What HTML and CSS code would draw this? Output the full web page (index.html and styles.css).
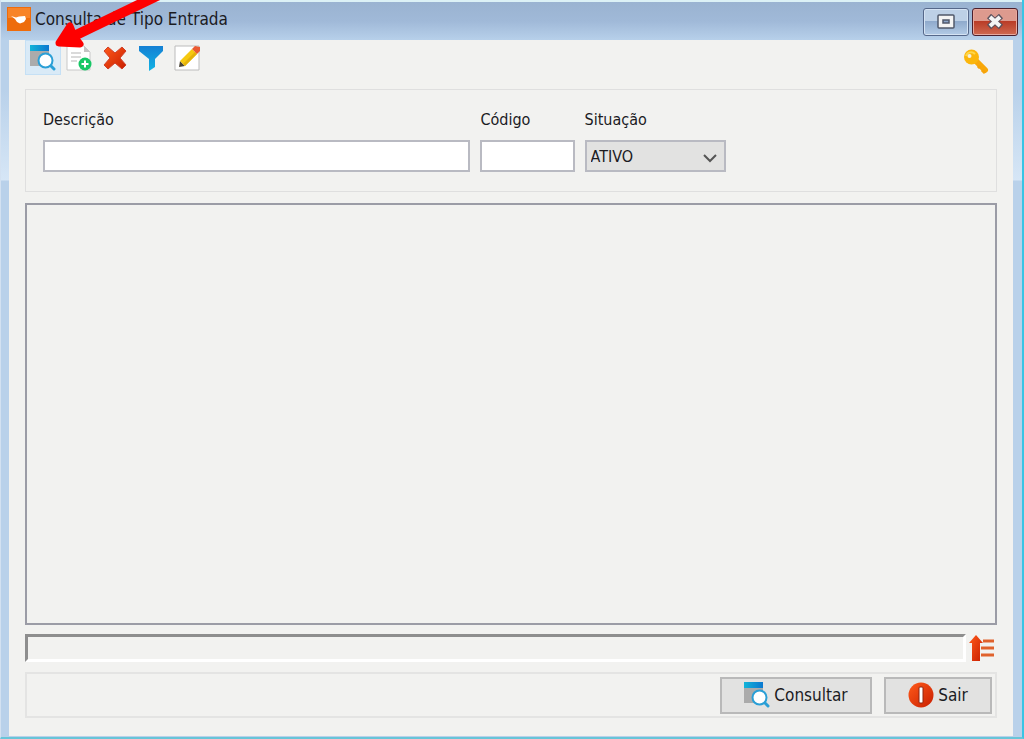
FILE: index.html
```
<!DOCTYPE html>
<html lang="pt-BR">
<head>
    <meta charset="utf-8">
    <title>Consulta de Tipo Entrada</title>
    <link rel="stylesheet" href="styles.css">
</head>
<body>
    <svg width="0" height="0" class="defs">
        <defs>
            <linearGradient id="azul" x1="0" x2="1" y1="0" y2="0">
                <stop offset="0" stop-color="#12b4d8"/>
                <stop offset="1" stop-color="#0b78d0"/>
            </linearGradient>
            <linearGradient id="funil" x1="0" x2="0" y1="0" y2="1">
                <stop offset="0" stop-color="#1580d4"/>
                <stop offset="1" stop-color="#12b4e4"/>
            </linearGradient>
            <linearGradient id="vermelho" x1="0" x2="1" y1="0" y2="1">
                <stop offset="0" stop-color="#ff5a1a"/>
                <stop offset="1" stop-color="#c81e00"/>
            </linearGradient>
            <symbol id="consulta" viewBox="0 0 26 26">
                <path d="M0 5h19v16H0z" fill="#ababab"/>
                <path d="M0 0h19v6H0z" fill="url(#azul)"/>
                <path d="M20 20l4 4" stroke="#2a9fd6" stroke-width="3" stroke-linecap="round"/>
                <circle cx="15.500" cy="15.500" r="7" fill="#fff" stroke="#2a9fd6" stroke-width="2"/>
            </symbol>
        </defs>
    </svg>

    <div class="janela">
        <header class="titulo">
            <svg class="logo" width="24" height="24" viewBox="0 0 24 24">
                <path d="M0 0h24v24H0z" fill="#ee6c0c"/>
                <path d="M1 1h22v10H1z" fill="#f88428"/>
                <path d="M4 9l5 1.500 3-1 6-.5 1 3-2 3-4 1.500-3-1.500-2-3z" fill="#fff"/>
            </svg>
            <h1>Consulta de Tipo Entrada</h1>
            <button type="button" class="controle" aria-label="Maximizar">
                <svg width="18" height="16" viewBox="0 0 18 16">
                    <rect x="1" y="1" width="16" height="13" rx="1" fill="#f4f4f4" stroke="#50586a" stroke-width="1.500"/>
                    <rect x="6" y="6" width="6" height="3" fill="#8ba5c9" stroke="#50586a" stroke-width="1.500"/>
                </svg>
            </button>
            <button type="button" class="controle fechar" aria-label="Fechar">
                <svg width="18" height="16" viewBox="0 0 18 16">
                    <path d="M3 2l12 11M15 2L3 13" stroke="#59515c" stroke-width="6"/>
                    <path d="M4 3l10 9M14 3L4 12" stroke="#f4f4f4" stroke-width="4"/>
                </svg>
            </button>
        </header>

        <main class="conteudo">
            <div class="barra">
                <button type="button" class="ativo" aria-label="Consultar registros"><svg width="26" height="26"><use href="#consulta"/></svg></button>
                <button type="button" aria-label="Novo">
                    <svg width="26" height="26" viewBox="0 0 26 26">
                        <path d="M1 1h17l6 6v18H1z" fill="#fff" stroke="#c8c8c8"/>
                        <path d="M18 1v6h6z" fill="#c4c4c4"/>
                        <path d="M5 8h10M5 12h10M5 16h6" stroke="#dadada" stroke-width="2"/>
                        <circle cx="19" cy="19" r="6.500" fill="#16c765"/>
                        <path d="M19 15.500v7M15.500 19h7" stroke="#fff" stroke-width="2"/>
                    </svg>
                </button>
                <button type="button" aria-label="Excluir">
                    <svg width="26" height="26" viewBox="0 0 26 26">
                        <path d="M2 6l4-4 7 6 7-6 4 4-6 7 6 7-4 4-7-6-7 6-4-4 6-7z" fill="url(#vermelho)" stroke="#d0402a"/>
                    </svg>
                </button>
                <button type="button" aria-label="Filtrar">
                    <svg width="26" height="26" viewBox="0 0 26 26">
                        <path d="M1 1h24v5l-8 8v8l-6 4V14L1 6z" fill="url(#funil)"/>
                    </svg>
                </button>
                <button type="button" aria-label="Editar">
                    <svg width="26" height="26" viewBox="0 0 26 26">
                        <path d="M1 1h24v24H1z" fill="#fff" stroke="#bcbcbc"/>
                        <path d="M5 22l1-6 5 5z" fill="#4a4436"/>
                        <path d="M6 16L18 4l5 5-12 12z" fill="#f6c911"/>
                        <path d="M9 19L21 7l2 2-12 12z" fill="#e4b20a"/>
                        <path d="M18 4l3-3 5 1v4l-3 3z" fill="#ea5a32"/>
                    </svg>
                </button>
                <button type="button" class="chave" aria-label="Permissões">
                    <svg width="26" height="26" viewBox="0 0 26 26">
                        <path d="M11 10l11 11" stroke="#f9a80a" stroke-width="6" stroke-linecap="round"/>
                        <path d="M15 17l2 2M19 21l3 3" stroke="#f5a30a" stroke-width="3"/>
                        <circle cx="8.500" cy="8" r="7.500" fill="#fbb60c"/>
                        <path d="M3 7c1-4 6-5 9-2" stroke="#ffd74a" stroke-width="2" fill="none"/>
                        <circle cx="6.500" cy="7" r="2" fill="#f3f1e4"/>
                    </svg>
                </button>
            </div>

            <form class="filtros">
                <div class="campo">
                    <label for="descricao">Descrição</label>
                    <input type="text" id="descricao" name="descricao">
                </div>
                <div class="campo">
                    <label for="codigo">Código</label>
                    <input type="text" id="codigo" name="codigo">
                </div>
                <div class="campo">
                    <label for="situacao">Situação</label>
                    <div class="selecao">
                        <select id="situacao" name="situacao">
                            <option>ATIVO</option>
                        </select>
                        <svg width="14" height="9" viewBox="0 0 14 9"><path d="M1 1l6 6 6-6" fill="none" stroke="#555" stroke-width="2"/></svg>
                    </div>
                </div>
            </form>

            <div class="resultado"></div>

            <div class="status">
                <div class="mensagem"></div>
                <button type="button" aria-label="Ordenar">
                    <svg width="26" height="26" viewBox="0 0 26 26">
                        <path d="M7 0l7 8h-3v18H3V8H0z" fill="url(#vermelho)"/>
                        <path d="M14 6h11M12 13h13M12 20h13" stroke="#e0622c" stroke-width="3"/>
                    </svg>
                </button>
            </div>

            <footer class="acoes">
                <button type="button" class="consultar"><svg width="26" height="26"><use href="#consulta"/></svg>Consultar</button>
                <button type="button" class="sair">
                    <svg width="26" height="26" viewBox="0 0 26 26">
                        <circle cx="13" cy="13" r="12.500" fill="url(#vermelho)"/>
                        <rect x="11" y="5" width="4" height="16" rx="1" fill="#fff" stroke="#8e2410"/>
                    </svg>Sair
                </button>
            </footer>
        </main>
    </div>

    <svg class="seta" width="170" height="60" viewBox="0 0 170 60">
        <path d="M161-6L72 37" stroke="#fe0000" stroke-width="10"/>
        <path d="M59 43L70 26L74 36L80 44z" fill="#fe0000" stroke="#fe0000" stroke-width="7" stroke-linejoin="round"/>
    </svg>
</body>
</html>
```

FILE: styles.css
```
* {
    box-sizing: border-box;
}

body {
    margin: 0;
    font-family: "DejaVu Sans Condensed", "DejaVu Sans", sans-serif;
    font-size: 16px;
    color: #1b1b1f;
}

button {
    font: inherit;
    color: inherit;
    padding: 0;
    border: none;
    background: none;
}

svg {
    display: block;
    flex: none;
}

.defs {
    position: absolute;
}

.janela {
    min-height: 100vh;
    display: flex;
    flex-direction: column;
    padding: 0 9px 1px 8px;
    border-left: 1px solid #d3e1f1;
    border-right: 2px solid #38c4e4;
    border-bottom: 2px solid #68c5d8;
    background: linear-gradient(#b9d1ea 40px, #b9d1ea 90px, #d6e6f6 180px, #b9d1ea 181px);
}

/* barra de titulo */
.titulo {
    height: 40px;
    margin: 0 -9px 0 -8px;
    padding: 0 4px 0 6px;
    display: flex;
    align-items: flex-start;
    background: linear-gradient(#9ab3d1, #a0b9d8 50%, #b7d0ea);
    border-top: 2px solid #dcf1f6;
}

.logo {
    margin-top: 5px;
}

.titulo h1 {
    flex: 1;
    margin: 0 0 0 4px;
    font-size: 17px;
    font-weight: normal;
    line-height: 34px;
}

.controle {
    width: 46px;
    height: 28px;
    margin-top: 6px;
    margin-left: 3px;
    display: flex;
    align-items: center;
    justify-content: center;
    border: 1px solid #56688a;
    border-radius: 3px;
    box-shadow: inset 0 0 0 1px #d5e3f3;
    background: linear-gradient(#bdd0e6 45%, #8ea9cb 46%, #b3cbe6);
}

.fechar {
    border-color: #4c1f2c;
    box-shadow: inset 0 0 0 1px #e7a99e;
    background: linear-gradient(#dd9a8e 45%, #b93a26 46%, #cf6a50);
}

/* area interna */
.conteudo {
    flex: 1;
    display: flex;
    flex-direction: column;
    padding: 0 16px 18px;
    background: #f2f2f0;
}

.barra {
    height: 35px;
    display: flex;
}

.barra button {
    width: 36px;
    height: 35px;
    display: flex;
    align-items: center;
    justify-content: center;
}

.barra .ativo {
    background: #d9eaf7;
    border: 1px solid #c5e0f5;
}

.barra .chave {
    margin-left: auto;
    margin-top: 4px;
    margin-right: 3px;
}

.filtros {
    height: 103px;
    margin-top: 14px;
    padding: 20px 17px;
    display: grid;
    grid-template-columns: 427fr 94fr 141fr 243fr;
    gap: 10px;
    border: 1px solid #dfdfdf;
}

.campo label {
    display: block;
    line-height: 20px;
    margin-bottom: 10px;
}

.campo input,
.campo select {
    display: block;
    width: 100%;
    height: 32px;
    padding: 0 5px;
    border: 2px solid #b9bac2;
    border-radius: 0;
    background: #fff;
    font: inherit;
    color: inherit;
}

.campo select {
    appearance: none;
    padding: 0 4px;
    background: #e2e2e1;
}

.selecao {
    position: relative;
}

.selecao svg {
    position: absolute;
    right: 9px;
    top: 14px;
    pointer-events: none;
}

.resultado {
    flex: 1;
    margin-top: 11px;
    border: 2px solid #9b9ca6;
}

.status {
    margin-top: 9px;
    display: flex;
    align-items: center;
    gap: 3px;
}

.mensagem {
    flex: 1;
    height: 28px;
    border: 3px solid #fff;
    border-top-color: #8e8e8e;
    border-left-color: #8e8e8e;
}

.status button {
    margin-right: 2px;
}

.acoes {
    height: 46px;
    margin-top: 10px;
    padding: 0 3px;
    display: flex;
    align-items: center;
    justify-content: flex-end;
    gap: 12px;
    border: 2px solid #e4e4e3;
}

.acoes button {
    height: 37px;
    display: flex;
    align-items: center;
    justify-content: center;
    gap: 4px;
    font-size: 17px;
    background: #e2e2e1;
    border: 2px solid #b9b9b9;
}

.consultar {
    width: 152px;
}

.sair {
    width: 108px;
}

/* seta vermelha apontando para o botao de consulta */
.seta {
    position: absolute;
    top: 0;
    left: 0;
    pointer-events: none;
}
```
